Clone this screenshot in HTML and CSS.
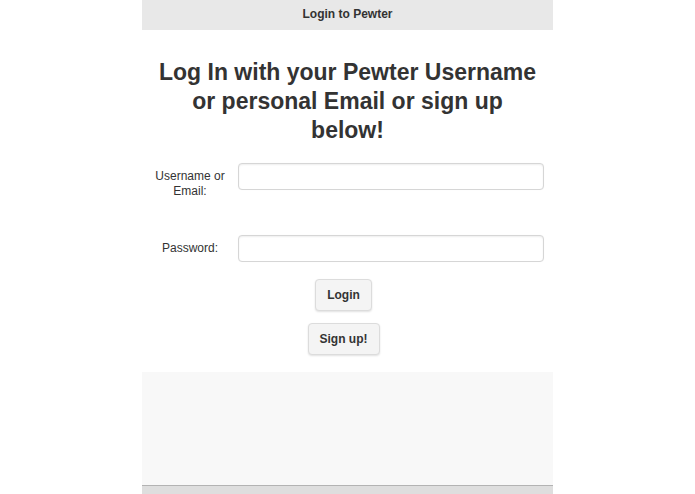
FILE: index.html
```html
<!DOCTYPE html>
<html lang="en">
<head>
<meta charset="utf-8">
<title>Login to Pewter</title>
<link rel="stylesheet" href="styles.css">
</head>
<body>
<div class="app">
  <header class="topbar">Login to Pewter</header>
  <main class="content">
    <h1 class="title">Log In with your Pewter Username or personal Email or sign up below!</h1>
    <form class="login-form">
      <div class="row row-user">
        <label class="label" for="user">Username or Email:</label>
        <input class="field" id="user" type="text">
      </div>
      <div class="row row-pass">
        <label class="label label-single" for="pass">Password:</label>
        <input class="field" id="pass" type="password">
      </div>
      <div class="actions">
        <button class="btn" type="button">Login</button>
        <button class="btn" type="button">Sign up!</button>
      </div>
    </form>
  </main>
  <div class="filler"></div>
  <div class="bottombar"></div>
</div>
</body>
</html>
```
FILE: styles.css
```css
html, body {
  margin: 0;
  padding: 0;
  background: #ffffff;
}
body {
  font-family: "Liberation Sans", Arial, Helvetica, sans-serif;
  color: #333333;
}
.app {
  width: 411px;
  margin: 0 auto;
  height: 100vh;
  display: flex;
  flex-direction: column;
}
.topbar {
  height: 30px;
  line-height: 29px;
  background: #e8e8e8;
  text-align: center;
  font-size: 12px;
  font-weight: bold;
  color: #333333;
  flex: none;
}
.content {
  background: #ffffff;
  padding: 28px 0 17px;
  flex: none;
}
.title {
  margin: 0 0 18px;
  padding: 0 13px;
  font-size: 23px;
  line-height: 29px;
  font-weight: bold;
  text-align: center;
  color: #333333;
}
.login-form {
  margin: 0;
}
.row {
  display: grid;
  grid-template-columns: 96px 306px;
}
.row-pass {
  margin-top: 36px;
}
.label {
  font-size: 12px;
  line-height: 15px;
  text-align: center;
  padding-top: 6px;
  padding-left: 3px;
  padding-right: 3px;
}
.label-single {
  padding-top: 0;
  align-self: center;
}
.field {
  box-sizing: border-box;
  height: 27px;
  width: 306px;
  margin: 0;
  border: 1px solid #d6d6d6;
  border-radius: 4px;
  background: #ffffff;
  box-shadow: inset 0 1px 2px rgba(0, 0, 0, 0.07), 0 0 1px rgba(0, 0, 0, 0.05);
  align-self: start;
}
.actions {
  margin-top: 17px;
  padding-right: 8px;
  display: flex;
  flex-direction: column;
  align-items: center;
  gap: 12px;
}
.btn {
  box-sizing: border-box;
  height: 32px;
  padding: 0 11px;
  border: 1px solid #dcdcdc;
  border-radius: 4px;
  background: #f4f4f4;
  box-shadow: 0 1px 2px rgba(0, 0, 0, 0.12);
  font-family: "Liberation Sans", Arial, Helvetica, sans-serif;
  font-size: 12px;
  font-weight: bold;
  color: #333333;
}
.filler {
  flex: 1;
  background: #f8f8f8;
}
.bottombar {
  flex: none;
  height: 8px;
  border-top: 1px solid #b3b3b3;
  background: #dedede;
}
```
